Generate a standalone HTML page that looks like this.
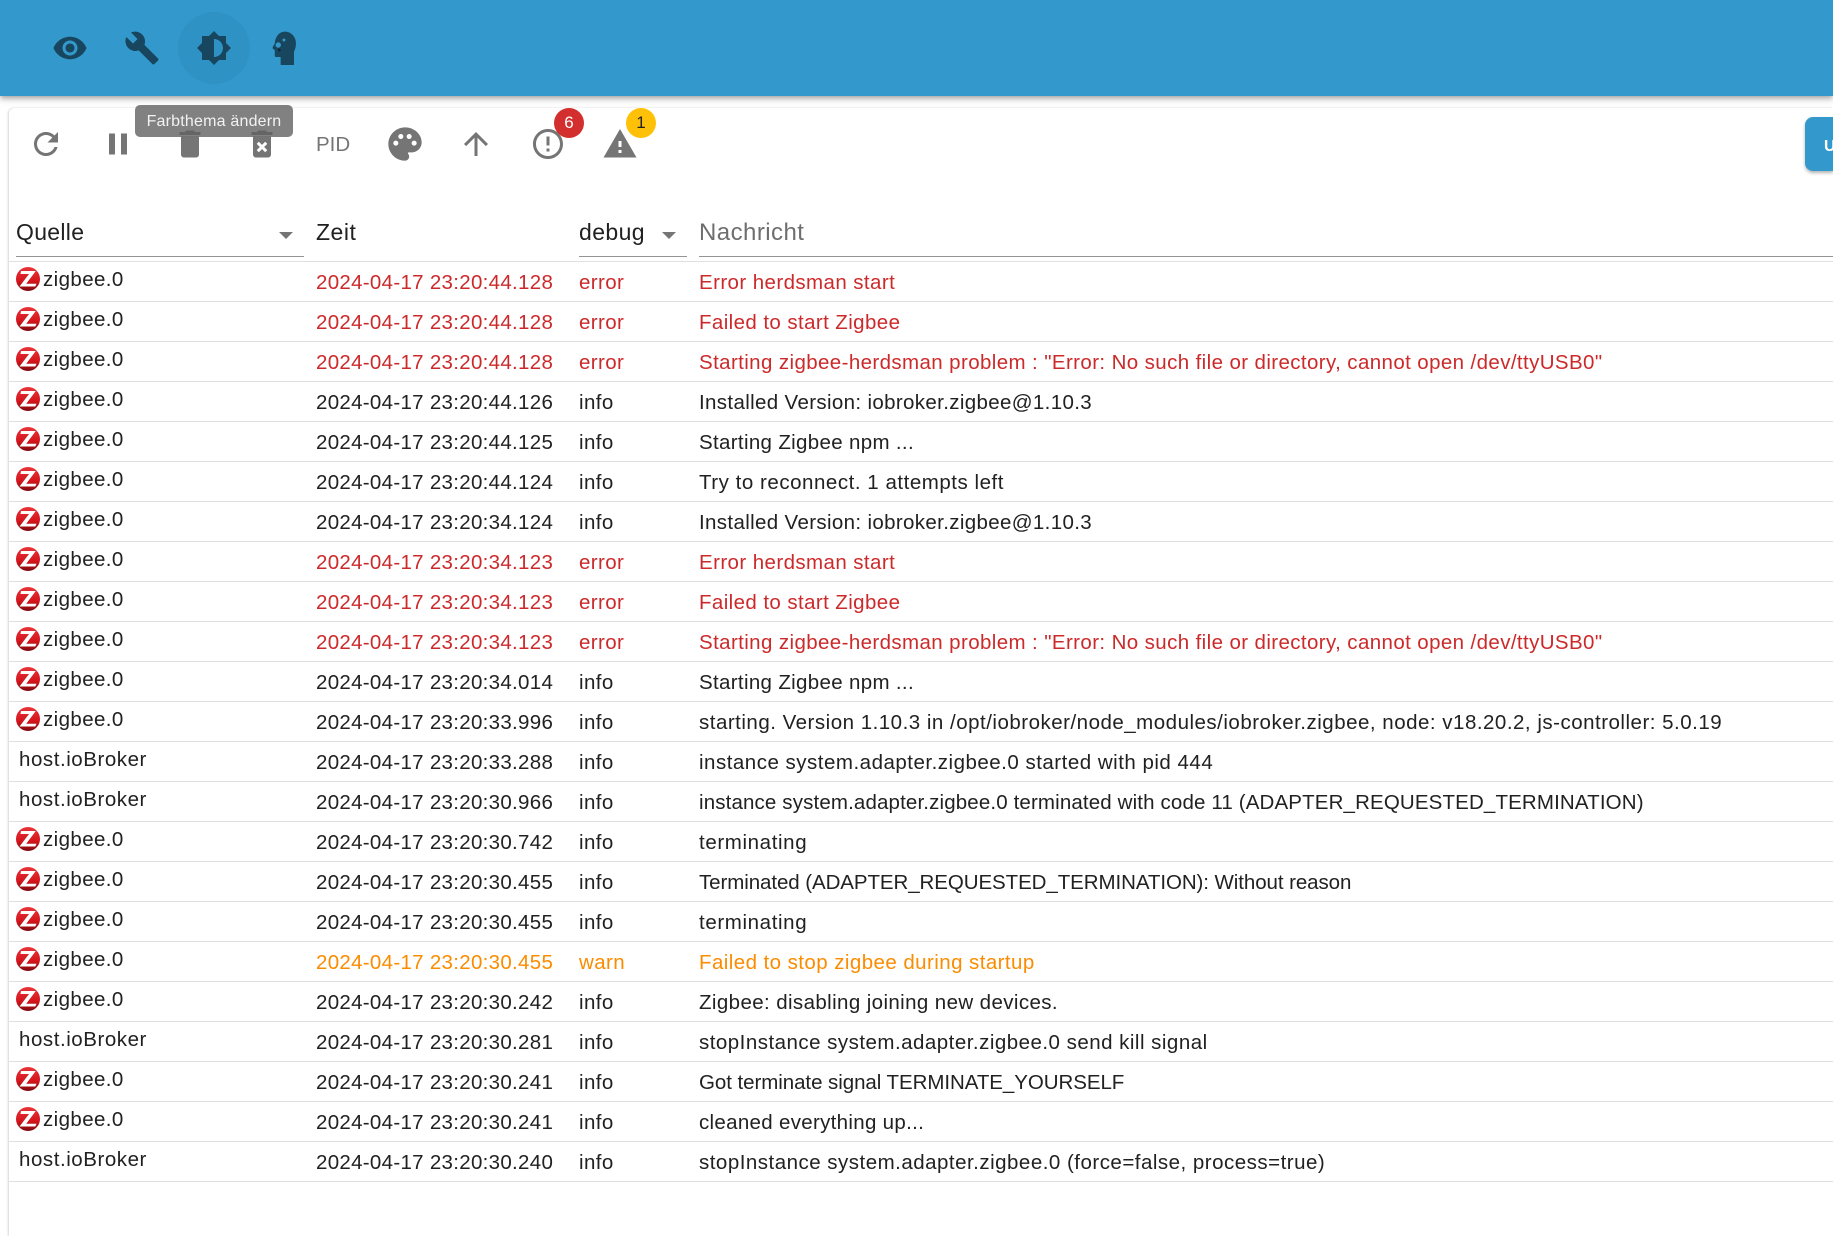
<!DOCTYPE html>
<html lang="de">
<head>
<meta charset="utf-8">
<title>Log</title>
<style>
*{box-sizing:border-box}
html,body{margin:0;padding:0;width:1833px;height:1236px;overflow:hidden;background:#fff;font-family:"Liberation Sans",sans-serif;color:#212121}
.page{position:relative;width:1833px;height:1236px;overflow:hidden;background:#fff}
.bar{position:absolute;left:0;top:0;width:1833px;height:96px;background:#3399cc;box-shadow:0 2px 4px -1px rgba(0,0,0,.2),0 4px 5px rgba(0,0,0,.14),0 1px 10px rgba(0,0,0,.12);z-index:2}
.hov{position:absolute;left:178px;top:12px;width:72px;height:72px;border-radius:50%;background:#2f92c4}
.paper{position:absolute;left:9px;top:108px;width:1824px;height:1128px;background:#fff;border-radius:6px 0 0 0;box-shadow:-1px 0 2px rgba(0,0,0,.17)}
svg.i{position:absolute;fill:#757575;width:36px;height:36px}
.bar svg.i{fill:#17465e}
.tip{position:absolute;left:135px;top:105px;width:158px;height:32px;border-radius:5px;background:rgba(97,97,97,.8);color:#f2f2f2;font-size:16px;letter-spacing:.2px;line-height:33px;text-align:center;z-index:3}
.pid{position:absolute;left:316px;top:132px;font-size:20.5px;line-height:25px;color:#757575}
.bdg{position:absolute;top:108px;width:30px;height:30px;border-radius:50%;text-align:center;font-size:17px;line-height:30px}
.upd{position:absolute;left:1805px;top:117px;width:28px;height:54px;border-radius:8px 0 0 8px;background:#3399cc;box-shadow:0 2px 3px rgba(0,0,0,.3);color:#fff;font-size:16px;font-weight:bold;line-height:54px;padding-left:19px;padding-top:3px;overflow:hidden}
.h{position:absolute;top:218px;font-size:23px;line-height:28px}
.ul{position:absolute;top:256px;height:1px;background:#949494}
.tri{position:absolute;top:232px;width:0;height:0;border-left:7px solid transparent;border-right:7px solid transparent;border-top:7px solid #757575}
.rows{position:absolute;left:9px;top:262px;width:1824px}
.r{position:relative;height:40px;border-bottom:1px solid #e0e0e0;font-size:20.5px;line-height:24px;white-space:nowrap}
.r>*{position:absolute}
.r svg{left:7px;top:5px;width:24px;height:24px}
.s{left:34px;top:6px;letter-spacing:.4px}
.n{left:10px;top:6px;letter-spacing:.55px}
.t{left:307px;top:9px;letter-spacing:.3px}
.l{left:570px;top:9px;letter-spacing:.4px}
.m{left:690px;top:9px;letter-spacing:.42px}
.e{color:#cc2a2a}
.w{color:#fb8c00}
.e .s,.e .n,.w .s,.w .n{color:#212121}
</style>
</head>
<body>
<div class="page">
<svg width="0" height="0" style="position:absolute">
<defs>
<linearGradient id="zg" x1="0" y1="0" x2="0" y2="1"><stop offset="0" stop-color="#e9343a"/><stop offset=".6" stop-color="#d3151d"/><stop offset="1" stop-color="#7d0a10"/></linearGradient>
<symbol id="zb" viewBox="0 0 24 24"><circle cx="12" cy="12" r="12" fill="url(#zg)"/><path d="M5 4H19.800L10.200 16.800H20.500L19.300 19.500H3.500L13 7H4.500z" fill="#fff"/></symbol>
</defs>
</svg>

<div class="paper"></div>

<div class="bar">
  <div class="hov"></div>
  <svg class="i" style="left:52px;top:30px" viewBox="0 0 24 24"><path d="M12 4.5C7 4.5 2.73 7.61 1 12c1.73 4.39 6 7.5 11 7.5s9.27-3.11 11-7.5c-1.73-4.39-6-7.5-11-7.5zM12 17c-2.76 0-5-2.24-5-5s2.24-5 5-5 5 2.24 5 5-2.24 5-5 5zm0-8c-1.66 0-3 1.34-3 3s1.34 3 3 3 3-1.34 3-3-1.34-3-3-3z"/></svg>
  <svg class="i" style="left:124px;top:30px" viewBox="0 0 24 24"><path d="M22.7 19l-9.1-9.1c.9-2.3.4-5-1.5-6.9-2-2-5-2.4-7.4-1.3L9 6 6 9 1.6 4.7C.4 7.1.9 10.1 2.9 12.1c1.9 1.9 4.6 2.4 6.9 1.5l9.1 9.1c.4.4 1 .4 1.4 0l2.3-2.3c.5-.4.5-1.1.1-1.4z"/></svg>
  <svg class="i" style="left:196px;top:30px" viewBox="0 0 24 24"><path d="M20 15.31L23.31 12 20 8.69V4h-4.69L12 .69 8.69 4H4v4.69L.69 12 4 15.31V20h4.69L12 23.31 15.31 20H20v-4.69zM12 18V6c3.31 0 6 2.69 6 6s-2.69 6-6 6z"/></svg>
  <svg class="i" style="left:267px;top:30px" viewBox="0 0 24 24"><path fill-rule="evenodd" d="M12 1.100C16 1.100 19.300 4.500 19.300 8.900C19.300 11 18.800 13 18 14.400V23.300H9.100V18H6C5.400 18 5.200 17.600 5.200 17V13.500L3.800 12.300C3.600 12 3.800 11.500 4 11L5.200 9C5.400 5 7.800 1.100 12 1.100zM7.500 8.200a1.800 1.800 0 1 0 0 3.600 1.800 1.800 0 0 0 0-3.600zM11.300 5.700a1 1 0 1 0 0 2 1 1 0 0 0 0-2z"/><circle cx="8.200" cy="13.300" r=".9" fill="#0b2634"/></svg>
</div>

<svg class="i" style="left:28px;top:126px" viewBox="0 0 24 24"><path d="M17.65 6.35C16.2 4.9 14.21 4 12 4c-4.42 0-7.99 3.58-7.99 8s3.57 8 7.99 8c3.73 0 6.84-2.55 7.73-6h-2.08c-.82 2.33-3.04 4-5.65 4-3.31 0-6-2.69-6-6s2.69-6 6-6c1.66 0 3.14.69 4.22 1.78L13 11h7V4l-2.35 2.35z"/></svg>
<svg class="i" style="left:100px;top:126px" viewBox="0 0 24 24"><path d="M6 19h4V5H6v14zm8-14v14h4V5h-4z"/></svg>
<svg class="i" style="left:172px;top:126px" viewBox="0 0 24 24"><path d="M6 19c0 1.1.9 2 2 2h8c1.1 0 2-.9 2-2V7H6v12zM19 4h-3.5l-1-1h-5l-1 1H5v2h14V4z"/></svg>
<svg class="i" style="left:244px;top:126px" viewBox="0 0 24 24"><path d="M6 19c0 1.1.9 2 2 2h8c1.1 0 2-.9 2-2V7H6v12zm2.46-7.12l1.41-1.41L12 12.59l2.12-2.12 1.41 1.41L13.41 14l2.12 2.12-1.41 1.41L12 15.41l-2.12 2.12-1.41-1.41L10.59 14l-2.13-2.12zM15.5 4l-1-1h-5l-1 1H5v2h14V4z"/></svg>
<div class="pid">PID</div>
<svg class="i" style="left:385px;top:124px;width:40px;height:40px" viewBox="0 0 24 24"><path d="M12 2C6.49 2 2 6.49 2 12s4.49 10 10 10c1.38 0 2.5-1.12 2.5-2.5 0-.61-.23-1.2-.64-1.67-.08-.1-.13-.21-.13-.33 0-.28.22-.5.5-.5H16c3.31 0 6-2.69 6-6 0-4.96-4.49-9-10-9zm5.5 11c-.83 0-1.5-.67-1.5-1.5s.67-1.5 1.5-1.5 1.5.67 1.5 1.5-.67 1.5-1.5 1.5zm-3-4c-.83 0-1.5-.67-1.5-1.5S13.67 6 14.5 6s1.5.67 1.5 1.5S15.33 9 14.5 9zM5 11.5c0-.83.67-1.5 1.5-1.5s1.5.67 1.5 1.5S7.33 13 6.5 13 5 12.33 5 11.5zm6-4c0 .83-.67 1.5-1.5 1.5S8 8.33 8 7.5 8.67 6 9.5 6s1.5.67 1.5 1.5z"/></svg>
<svg class="i" style="left:458px;top:126px" viewBox="0 0 24 24"><path d="M4 12l1.41 1.41L11 7.83V20h2V7.83l5.58 5.59L20 12l-8-8-8 8z"/></svg>
<svg class="i" style="left:530px;top:126px" viewBox="0 0 24 24"><path d="M11 15h2v2h-2zm0-8h2v6h-2zm.99-5C6.47 2 2 6.48 2 12s4.47 10 9.99 10C17.52 22 22 17.52 22 12S17.52 2 11.99 2zM12 20c-4.42 0-8-3.58-8-8s3.58-8 8-8 8 3.58 8 8-3.58 8-8 8z"/></svg>
<svg class="i" style="left:602px;top:126px" viewBox="0 0 24 24"><path d="M1 21h22L12 2 1 21zm12-3h-2v-2h2v2zm0-4h-2v-4h2v4z"/></svg>
<div class="bdg" style="left:554px;background:#d32f2f;color:#fff">6</div>
<div class="bdg" style="left:626px;background:#ffc107;color:#212121">1</div>
<div class="tip">Farbthema ändern</div>
<div class="upd">U</div>

<div class="h" style="left:16px;letter-spacing:.3px">Quelle</div>
<div class="tri" style="left:279px"></div>
<div class="ul" style="left:16px;width:288px"></div>
<div class="h" style="left:316px;letter-spacing:.5px">Zeit</div>
<div class="h" style="left:579px;letter-spacing:.4px">debug</div>
<div class="tri" style="left:662px"></div>
<div class="ul" style="left:579px;width:108px"></div>
<div class="h" style="left:699px;top:219px;color:#6e6e6e;font-size:24px;letter-spacing:.45px">Nachricht</div>
<div class="ul" style="left:699px;width:1134px"></div>
<div style="position:absolute;left:9px;top:261px;width:1824px;height:1px;background:#e0e0e0"></div>

<div class="rows">
<div class="r e"><svg><use href="#zb"/></svg><span class="s">zigbee.0</span><span class="t">2024-04-17 23:20:44.128</span><span class="l">error</span><span class="m" style="letter-spacing:.41px">Error herdsman start</span></div>
<div class="r e"><svg><use href="#zb"/></svg><span class="s">zigbee.0</span><span class="t">2024-04-17 23:20:44.128</span><span class="l">error</span><span class="m" style="letter-spacing:.4px">Failed to start Zigbee</span></div>
<div class="r e"><svg><use href="#zb"/></svg><span class="s">zigbee.0</span><span class="t">2024-04-17 23:20:44.128</span><span class="l">error</span><span class="m" style="letter-spacing:.39px">Starting zigbee-herdsman problem : "Error: No such file or directory, cannot open /dev/ttyUSB0"</span></div>
<div class="r"><svg><use href="#zb"/></svg><span class="s">zigbee.0</span><span class="t">2024-04-17 23:20:44.126</span><span class="l">info</span><span class="m" style="letter-spacing:.35px">Installed Version: iobroker.zigbee@1.10.3</span></div>
<div class="r"><svg><use href="#zb"/></svg><span class="s">zigbee.0</span><span class="t">2024-04-17 23:20:44.125</span><span class="l">info</span><span class="m" style="letter-spacing:.33px">Starting Zigbee npm ...</span></div>
<div class="r"><svg><use href="#zb"/></svg><span class="s">zigbee.0</span><span class="t">2024-04-17 23:20:44.124</span><span class="l">info</span><span class="m" style="letter-spacing:.53px">Try to reconnect. 1 attempts left</span></div>
<div class="r"><svg><use href="#zb"/></svg><span class="s">zigbee.0</span><span class="t">2024-04-17 23:20:34.124</span><span class="l">info</span><span class="m" style="letter-spacing:.35px">Installed Version: iobroker.zigbee@1.10.3</span></div>
<div class="r e"><svg><use href="#zb"/></svg><span class="s">zigbee.0</span><span class="t">2024-04-17 23:20:34.123</span><span class="l">error</span><span class="m" style="letter-spacing:.41px">Error herdsman start</span></div>
<div class="r e"><svg><use href="#zb"/></svg><span class="s">zigbee.0</span><span class="t">2024-04-17 23:20:34.123</span><span class="l">error</span><span class="m" style="letter-spacing:.4px">Failed to start Zigbee</span></div>
<div class="r e"><svg><use href="#zb"/></svg><span class="s">zigbee.0</span><span class="t">2024-04-17 23:20:34.123</span><span class="l">error</span><span class="m" style="letter-spacing:.39px">Starting zigbee-herdsman problem : "Error: No such file or directory, cannot open /dev/ttyUSB0"</span></div>
<div class="r"><svg><use href="#zb"/></svg><span class="s">zigbee.0</span><span class="t">2024-04-17 23:20:34.014</span><span class="l">info</span><span class="m" style="letter-spacing:.33px">Starting Zigbee npm ...</span></div>
<div class="r"><svg><use href="#zb"/></svg><span class="s">zigbee.0</span><span class="t">2024-04-17 23:20:33.996</span><span class="l">info</span><span class="m" style="letter-spacing:.5px">starting. Version 1.10.3 in /opt/iobroker/node_modules/iobroker.zigbee, node: v18.20.2, js-controller: 5.0.19</span></div>
<div class="r"><span class="n">host.ioBroker</span><span class="t">2024-04-17 23:20:33.288</span><span class="l">info</span><span class="m" style="letter-spacing:.5px">instance system.adapter.zigbee.0 started with pid 444</span></div>
<div class="r"><span class="n">host.ioBroker</span><span class="t">2024-04-17 23:20:30.966</span><span class="l">info</span><span class="m" style="letter-spacing:.14px">instance system.adapter.zigbee.0 terminated with code 11 (ADAPTER_REQUESTED_TERMINATION)</span></div>
<div class="r"><svg><use href="#zb"/></svg><span class="s">zigbee.0</span><span class="t">2024-04-17 23:20:30.742</span><span class="l">info</span><span class="m" style="letter-spacing:.62px">terminating</span></div>
<div class="r"><svg><use href="#zb"/></svg><span class="s">zigbee.0</span><span class="t">2024-04-17 23:20:30.455</span><span class="l">info</span><span class="m" style="letter-spacing:-.08px">Terminated (ADAPTER_REQUESTED_TERMINATION): Without reason</span></div>
<div class="r"><svg><use href="#zb"/></svg><span class="s">zigbee.0</span><span class="t">2024-04-17 23:20:30.455</span><span class="l">info</span><span class="m" style="letter-spacing:.62px">terminating</span></div>
<div class="r w"><svg><use href="#zb"/></svg><span class="s">zigbee.0</span><span class="t">2024-04-17 23:20:30.455</span><span class="l">warn</span><span class="m" style="letter-spacing:.43px">Failed to stop zigbee during startup</span></div>
<div class="r"><svg><use href="#zb"/></svg><span class="s">zigbee.0</span><span class="t">2024-04-17 23:20:30.242</span><span class="l">info</span><span class="m" style="letter-spacing:.39px">Zigbee: disabling joining new devices.</span></div>
<div class="r"><span class="n">host.ioBroker</span><span class="t">2024-04-17 23:20:30.281</span><span class="l">info</span><span class="m" style="letter-spacing:.48px">stopInstance system.adapter.zigbee.0 send kill signal</span></div>
<div class="r"><svg><use href="#zb"/></svg><span class="s">zigbee.0</span><span class="t">2024-04-17 23:20:30.241</span><span class="l">info</span><span class="m" style="letter-spacing:-.06px">Got terminate signal TERMINATE_YOURSELF</span></div>
<div class="r"><svg><use href="#zb"/></svg><span class="s">zigbee.0</span><span class="t">2024-04-17 23:20:30.241</span><span class="l">info</span><span class="m" style="letter-spacing:.31px">cleaned everything up...</span></div>
<div class="r"><span class="n">host.ioBroker</span><span class="t">2024-04-17 23:20:30.240</span><span class="l">info</span><span class="m" style="letter-spacing:.49px">stopInstance system.adapter.zigbee.0 (force=false, process=true)</span></div>
</div>
</div>
</body>
</html>
